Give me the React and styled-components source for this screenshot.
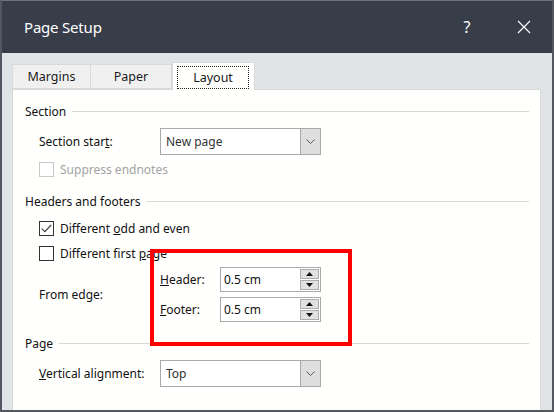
import React from 'react';
import styled, { createGlobalStyle } from 'styled-components';

const GlobalStyle = createGlobalStyle`
  html, body { margin: 0; padding: 0; background: #ffffff; }
  * { box-sizing: border-box; }
`;

const Window = styled.div`
  width: 554px;
  height: 412px;
  display: flex;
  flex-direction: column;
  background: #e1e4e7;
  border: 2px solid #54575f;
  border-top: 1px solid #6f727a;
  font-family: "Noto Sans", "Open Sans", sans-serif;
  font-size: 12px;
  color: #111;
  overflow: hidden;
`;

const TitleBar = styled.div`
  height: 52px;
  flex: none;
  display: flex;
  align-items: center;
  background: #383d4a;
  color: #fff;
  padding-left: 22px;
`;

const Title = styled.div`
  flex: 1;
  font-size: 15px;
  letter-spacing: -0.2px;
  margin-top: -1px;
`;

const TitleButton = styled.div`
  width: 46px;
  height: 52px;
  display: flex;
  align-items: center;
  justify-content: center;
  font-size: 16px;
  margin-right: ${p => p.$gap || 0}px;
`;

const Body = styled.div`
  flex: 1;
  display: flex;
  flex-direction: column;
  padding: 9px 11px 0 10px;
`;

const TabStrip = styled.div`
  display: flex;
  align-items: flex-end;
  height: 28px;
  flex: none;
  position: relative;
  z-index: 1;
  margin-bottom: -1px;
`;

const Tab = styled.div`
  width: ${p => p.$w}px;
  height: ${p => (p.$active ? 28 : 25)}px;
  margin-bottom: ${p => (p.$active ? 0 : 1)}px;
  display: flex;
  align-items: center;
  justify-content: center;
  background: ${p => (p.$active ? '#fffffd' : '#f0f0f0')};
  border: 1px solid #d9d9d9;
  border-bottom: ${p => (p.$active ? 'none' : '1px solid #d9d9d9')};
  border-left: ${p => (p.$first || p.$active ? '1px solid #d9d9d9' : 'none')};
  color: #1a1a1a;
  font-size: 12.5px;
  position: relative;
`;

const FocusRect = styled.div`
  position: absolute;
  left: 4px;
  right: 5px;
  top: 3px;
  bottom: 1px;
  border: 1px dotted #222;
  display: flex;
  align-items: center;
  justify-content: center;
`;

const Panel = styled.div`
  flex: 1;
  background: #fffffd;
  border: 1px solid #d9d9d9;
  border-bottom: none;
  padding: 0 11px 0 12px;
  position: relative;
`;

const Heading = styled.div`
  display: flex;
  align-items: center;
  height: 20px;
  margin-top: ${p => p.$mt}px;
  color: #111;
`;

const HeadLine = styled.div`
  flex: 1;
  height: 1px;
  background: #d9d9d9;
  margin-left: 6px;
  margin-top: 1px;
`;

const Row = styled.div`
  display: flex;
  align-items: center;
  margin-left: 14px;
  margin-top: ${p => p.$mt}px;
  height: ${p => p.$h}px;
  color: ${p => (p.$disabled ? '#a3a3a3' : '#111')};
`;

const Label = styled.div`
  width: ${p => p.$w}px;
  flex: none;
`;

const Combo = styled.div`
  width: 161px;
  height: ${p => p.$h}px;
  display: flex;
  border: 1px solid #a9a9a9;
  background: #fff;
`;

const ComboText = styled.div`
  flex: 1;
  display: flex;
  align-items: center;
  padding-left: 5px;
  color: #333;
`;

const ComboButton = styled.div`
  width: 20px;
  display: flex;
  align-items: center;
  justify-content: center;
  background: #dedede;
  border-left: 1px solid #a9a9a9;
`;

const Check = styled.div`
  width: 15px;
  height: 15px;
  flex: none;
  border: 1px solid ${p => (p.$disabled ? '#c9c9c9' : '#333')};
  background: #fff;
  display: flex;
  align-items: center;
  justify-content: center;
  margin-right: 6px;
`;

const CheckLabel = styled.span`
  white-space: pre;
`;

const EdgeGroup = styled.div`
  display: flex;
  align-items: center;
  margin-left: 14px;
  margin-top: 6px;
`;

const EdgeRows = styled.div`
  display: flex;
  flex-direction: column;
  gap: 5px;
`;

const SpinRow = styled.div`
  display: flex;
  align-items: center;
`;

const Spin = styled.div`
  width: 101px;
  height: 25px;
  display: flex;
  border: 1px solid #a9a9a9;
  background: #fff;
`;

const SpinText = styled.div`
  flex: 1;
  display: flex;
  align-items: center;
  padding-left: 3px;
  color: #111;
`;

const SpinButtons = styled.div`
  width: 20px;
  display: flex;
  flex-direction: column;
  gap: 1px;
  padding: 1px 1px 1px 0;
`;

const SpinButton = styled.div`
  flex: 1;
  background: #e1e1e1;
  border: 1px solid #adadad;
  display: flex;
  align-items: center;
  justify-content: center;
`;

const Highlight = styled.div`
  position: absolute;
  left: 137px;
  top: 159px;
  width: 202px;
  height: 97px;
  border: 4px solid #ff0000;
  pointer-events: none;
`;

const Chevron = () => (
  <svg width="9" height="5" viewBox="0 0 9 5">
    <path d="M0.5 0.5 L4.5 4.5 L8.5 0.5" fill="none" stroke="#5a5a5a" strokeWidth="1" />
  </svg>
);

const Tri = ({ up }) => (
  <svg width="7" height="4" viewBox="0 0 7 4">
    <path d={up ? 'M0 4 L3.5 0 L7 4 Z' : 'M0 0 L3.5 4 L7 0 Z'} fill="#111" />
  </svg>
);

const CheckMark = () => (
  <svg width="11" height="9" viewBox="0 0 11 9">
    <path d="M0.8 4.6 L3.8 7.6 L10.2 1" fill="none" stroke="#444" strokeWidth="1.2" />
  </svg>
);

const App = () => {
  return (
    <>
      <GlobalStyle />
      <Window>
        <TitleBar>
          <Title>Page Setup</Title>
          <TitleButton $gap={11}>?</TitleButton>
          <TitleButton $gap={5}>
            <svg width="14" height="14" viewBox="0 0 14 14">
              <path d="M1 1 L13 13 M13 1 L1 13" stroke="#fff" strokeWidth="1.1" />
            </svg>
          </TitleButton>
        </TitleBar>
        <Body>
          <TabStrip>
            <Tab $w={79} $first>Margins</Tab>
            <Tab $w={81}>Paper</Tab>
            <Tab $w={83} $active>
              <FocusRect>Layout</FocusRect>
            </Tab>
          </TabStrip>
          <Panel>
            <Heading $mt={11}>Section<HeadLine /></Heading>
            <Row $mt={7} $h={27}>
              <Label $w={121}>Section star<u>t</u>:</Label>
              <Combo $h={27}>
                <ComboText>New page</ComboText>
                <ComboButton><Chevron /></ComboButton>
              </Combo>
            </Row>
            <Row $mt={7} $h={15} $disabled>
              <Check $disabled />
              <CheckLabel>Suppress endnotes</CheckLabel>
            </Row>
            <Heading $mt={14}>Headers and footers<HeadLine /></Heading>
            <Row $mt={10} $h={15}>
              <Check><CheckMark /></Check>
              <CheckLabel>Different <u>o</u>dd and even</CheckLabel>
            </Row>
            <Row $mt={10} $h={15}>
              <Check />
              <CheckLabel>Different first <u>p</u>age</CheckLabel>
            </Row>
            <EdgeGroup>
              <Label $w={121}>From edge:</Label>
              <EdgeRows>
                <SpinRow>
                  <Label $w={60}><u>H</u>eader:</Label>
                  <Spin>
                    <SpinText>0.5 cm</SpinText>
                    <SpinButtons>
                      <SpinButton><Tri up /></SpinButton>
                      <SpinButton><Tri /></SpinButton>
                    </SpinButtons>
                  </Spin>
                </SpinRow>
                <SpinRow>
                  <Label $w={60}><u>F</u>ooter:</Label>
                  <Spin>
                    <SpinText>0.5 cm</SpinText>
                    <SpinButtons>
                      <SpinButton><Tri up /></SpinButton>
                      <SpinButton><Tri /></SpinButton>
                    </SpinButtons>
                  </Spin>
                </SpinRow>
              </EdgeRows>
            </EdgeGroup>
            <Heading $mt={11}>Page<HeadLine /></Heading>
            <Row $mt={7} $h={27}>
              <Label $w={121}><u>V</u>ertical alignment:</Label>
              <Combo $h={27}>
                <ComboText>Top</ComboText>
                <ComboButton><Chevron /></ComboButton>
              </Combo>
            </Row>
            <Highlight />
          </Panel>
        </Body>
      </Window>
    </>
  );
};

export default App;
